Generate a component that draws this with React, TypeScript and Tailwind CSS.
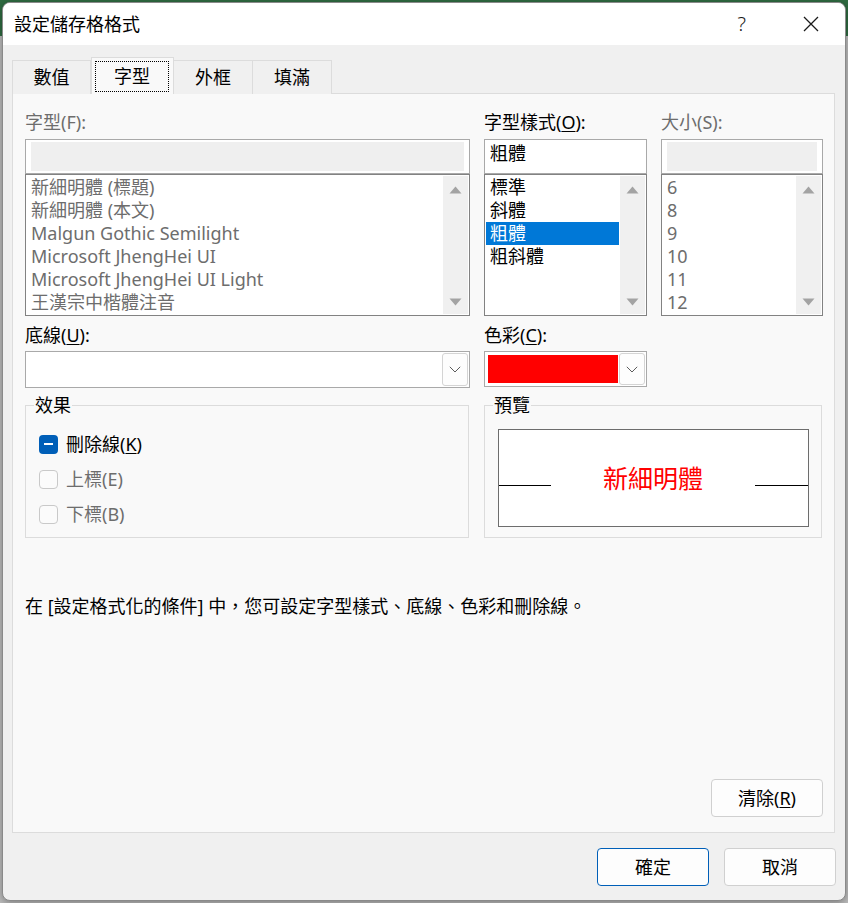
import React from 'react';

const FONT = "font-['Noto_Sans','Noto_Sans_CJK_TC',sans-serif]";

function UpTri() {
  return (
    <svg width="13" height="8" viewBox="0 0 13 8">
      <path d="M6.5 0.5 L12.5 7.5 L0.5 7.5 Z" fill="#a3a3a3" />
    </svg>
  );
}

function DownTri() {
  return (
    <svg width="13" height="8" viewBox="0 0 13 8">
      <path d="M0.5 0.5 L12.5 0.5 L6.5 7.5 Z" fill="#a3a3a3" />
    </svg>
  );
}

function Chevron() {
  return (
    <div className="w-[26px] my-[1px] mr-[1px] border border-[#d4d4d4] rounded-[3px] bg-[#fdfdfd] flex items-center justify-center">
      <svg width="12" height="7" viewBox="0 0 12 7">
        <path d="M0.8 0.8 L6 6 L11.2 0.8" fill="none" stroke="#5c5c5c" strokeWidth="1" />
      </svg>
    </div>
  );
}

function Combo({ value, items, disabled, selected }: {
  value?: string; items: string[]; disabled?: boolean; selected?: number;
}) {
  return (
    <div className="flex flex-col">
      <div className="h-[35px] border border-[#a9a9a9] bg-white flex">
        {disabled
          ? <div className="flex-1 mx-[5px] mt-[2px] mb-[2px] bg-[#efefef]" />
          : <div className="pl-[5px] pt-[1px] leading-[25px] text-black">{value}</div>}
      </div>
      <div className="h-[142px] border border-[#828282] bg-white flex">
        <div className="flex-1 pl-[1px] pt-[1px]">
          {items.map((it, i) => (
            <div
              key={it}
              className={`h-[23px] leading-[23px] pl-[4px] whitespace-nowrap ${
                i === selected ? 'bg-[#0078d7] text-white' : disabled ? 'text-[#6d6d6d]' : 'text-black'
              }`}
            >
              {it}
            </div>
          ))}
        </div>
        <div className="w-[25px] bg-[#f0f0f0] my-[1px] mx-[1px] flex flex-col items-center justify-between pt-[10px] pb-[8px]">
          <UpTri />
          <DownTri />
        </div>
      </div>
    </div>
  );
}

function Label({ children, disabled }: { children: React.ReactNode; disabled?: boolean }) {
  return (
    <div className={`h-[24px] leading-[24px] ${disabled ? 'text-[#6d6d6d]' : 'text-black'}`}>{children}</div>
  );
}

function Check({ label, checked }: { label: React.ReactNode; checked?: boolean }) {
  return (
    <div className="h-[24px] flex items-center gap-[8px]">
      {checked ? (
        <div className="w-[19px] h-[19px] rounded-[4px] bg-[#005fb8] flex items-center justify-center">
          <div className="w-[9px] h-[2px] bg-white" />
        </div>
      ) : (
        <div className="w-[19px] h-[19px] rounded-[4px] border border-[#c9c9c9] bg-[#fbfbfb]" />
      )}
      <span className={`leading-[24px] ${checked ? 'text-black' : 'text-[#6d6d6d]'}`}>{label}</span>
    </div>
  );
}

export default function App() {
  const tabs = ['數值', '字型', '外框', '填滿'];
  return (
    <div className={`w-[848px] h-[903px] bg-[linear-gradient(to_bottom,#2f6b41_0px,#2f6b41_36px,#bdbdbd_36px)] pt-[2px] pl-[2px] text-[18px] ${FONT}`}>
      <div className="w-[844px] h-[899px] rounded-[8px] bg-[#f0f0f0] border border-[#8a8a8a] shadow-[0_2px_8px_rgba(0,0,0,0.35)] overflow-hidden flex flex-col">
        {/* title bar */}
        <div className="h-[42px] bg-white flex items-center pl-[11px]">
          <span className="text-[18px] text-black">設定儲存格格式</span>
          <span className="ml-auto text-[20px] font-light leading-none text-[#1a1a1a]">?</span>
          <svg className="ml-[57px] mr-[26px]" width="16" height="16" viewBox="0 0 16 16">
            <path d="M1 1 L15 15 M15 1 L1 15" stroke="#1a1a1a" strokeWidth="1.3" fill="none" />
          </svg>
        </div>

        <div className="flex-1 pl-[9px] pt-[13px] flex flex-col">
          {/* tabs */}
          <div className="flex items-end h-[36px] -mb-px relative z-10">
            {tabs.map((t, i) =>
              i === 1 ? (
                <div key={t} className="w-[83px] h-[37px] bg-[#f9f9f9] border border-b-0 border-[#dcdcdc] flex pl-[3px] pr-[4px] pt-[3px] pb-[2px]">
                  <div className="flex-1 border border-dotted border-black flex items-center justify-center text-black">{t}</div>
                </div>
              ) : (
                <div key={t} className={`w-[79px] h-[34px] bg-[#f0f0f0] border border-b-0 border-[#dcdcdc] flex items-center justify-center text-black ${i === 2 ? '-ml-px w-[80px]' : ''} ${i === 3 ? '-ml-px w-[80px]' : ''}`}>
                  {t}
                </div>
              )
            )}
          </div>

          {/* panel */}
          <div className="w-[823px] h-[740px] border border-[#dcdcdc] bg-[#f9f9f9] flex flex-col pl-[12px] pr-[11px] pt-[16px] pb-[15px]">
            <div className="flex gap-[14px]">
              <div className="w-[445px] flex flex-col">
                <Label disabled>字型(F):</Label>
                <div className="mt-[5px]">
                  <Combo
                    disabled
                    items={['新細明體 (標題)', '新細明體 (本文)', 'Malgun Gothic Semilight', 'Microsoft JhengHei UI', 'Microsoft JhengHei UI Light', '王漢宗中楷體注音']}
                  />
                </div>
              </div>
              <div className="w-[163px] flex flex-col">
                <Label>字型樣式(<span className="underline underline-offset-2">O</span>):</Label>
                <div className="mt-[5px]">
                  <Combo value="粗體" items={['標準', '斜體', '粗體', '粗斜體']} selected={2} />
                </div>
              </div>
              <div className="w-[162px] flex flex-col">
                <Label disabled>大小(S):</Label>
                <div className="mt-[5px]">
                  <Combo disabled items={['6', '8', '9', '10', '11', '12']} />
                </div>
              </div>
            </div>

            <div className="mt-[7px] flex gap-[14px]">
              <div className="w-[445px] flex flex-col">
                <Label>底線(<span className="underline underline-offset-2">U</span>):</Label>
                <div className="mt-[4px] h-[37px] border border-[#a9a9a9] bg-white flex justify-end">
                  <Chevron />
                </div>
              </div>
              <div className="w-[163px] flex flex-col">
                <Label>色彩(<span className="underline underline-offset-2">C</span>):</Label>
                <div className="mt-[4px] h-[36px] border border-[#a9a9a9] bg-white flex">
                  <div className="flex-1 ml-[3px] my-[3px] mr-[1px] bg-[#ff0000]" />
                  <Chevron />
                </div>
              </div>
            </div>

            <div className="mt-[5px] flex gap-[15px]">
              <fieldset className="w-[444px] h-[145px] border border-[#dcdcdc]">
                <legend className="ml-[8px] px-[1px] leading-[24px] text-black">效果</legend>
                <div className="pl-[13px] pt-[15px] flex flex-col gap-[11px]">
                  <Check checked label={<>刪除線(<span className="underline underline-offset-2">K</span>)</>} />
                  <Check label="上標(E)" />
                  <Check label="下標(B)" />
                </div>
              </fieldset>
              <fieldset className="w-[338px] h-[145px] border border-[#dcdcdc]">
                <legend className="ml-[8px] px-[1px] leading-[24px] text-black">預覽</legend>
                <div className="ml-[13px] mt-[12px] w-[311px] h-[98px] border border-[#6d6d6d] bg-white flex items-center">
                  <div className="w-[52px] h-px bg-black mt-[14px]" />
                  <div className="flex-1 text-center text-[25px] text-[#ff0000] leading-none">新細明體</div>
                  <div className="w-[53px] h-px bg-black mt-[14px]" />
                </div>
              </fieldset>
            </div>

            <div className="mt-[56px] leading-[24px] text-black">
              在 [設定格式化的條件] 中，您可設定字型樣式、底線、色彩和刪除線。
            </div>

            <div className="mt-auto flex justify-end">
              <button className="w-[112px] h-[38px] rounded-[4px] border border-[#d0d0d0] bg-[#fdfdfd] text-black">
                清除(<span className="underline underline-offset-2">R</span>)
              </button>
            </div>
          </div>

          <div className="mt-[15px] w-[824px] flex justify-end gap-[15px]">
            <button className="w-[112px] h-[38px] rounded-[4px] border border-[#005fb8] bg-[#fdfdfd] text-black">確定</button>
            <button className="w-[112px] h-[38px] rounded-[4px] border border-[#d0d0d0] bg-[#fdfdfd] text-black">取消</button>
          </div>
        </div>
      </div>
    </div>
  );
}
